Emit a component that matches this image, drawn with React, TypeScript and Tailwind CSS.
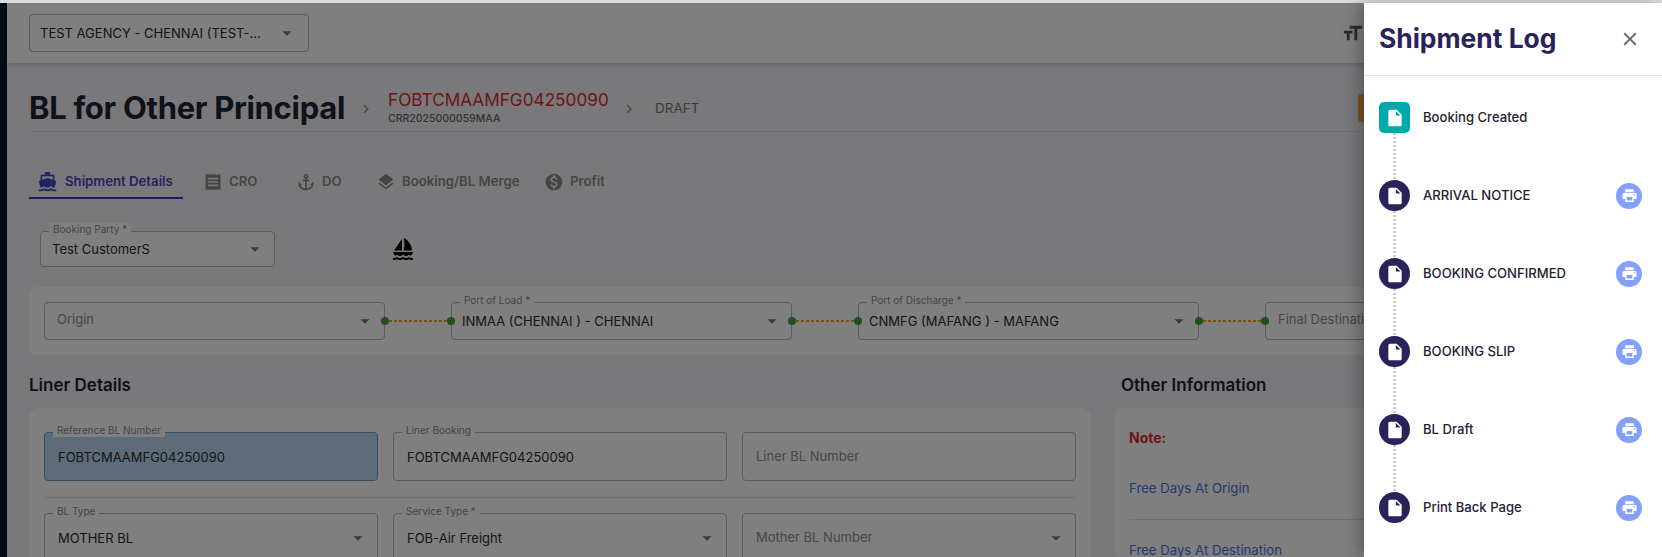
import React from "react";
import { MdArrowDropDown, MdChevronRight, MdClose, MdPrint, MdInsertDriveFile, MdDirectionsBoat, MdReceipt, MdAnchor, MdLayers, MdMonetizationOn, MdSailing, MdFormatSize } from "react-icons/md";

function Field({ label, value, placeholder, arrow, className = "", active, large }: { label?: string; value?: string; placeholder?: string; arrow?: boolean; className?: string; active?: boolean; large?: boolean }) {
  return (
    <div className={`relative flex shrink-0 items-center rounded-[4px] border pr-[8px] ${large ? "h-[49px] flex-1 pl-[13px]" : "pl-[11px]"} ${active ? "border-[#6f9bc8] bg-[#bcd8f5]" : "border-[#b5b5b5] bg-white"} ${className}`}>
      {label && <span className="absolute -top-[9px] left-[8px] bg-white px-[4px] text-[10px] leading-[13px] text-[#8a8a8a]">{label}</span>}
      <span className={`flex-1 truncate text-[13px] ${value ? "pt-[2px] text-[#2a2a2a]" : large ? "text-[#8d8d8d]" : "ml-[1px] pb-[2px] text-[#8d8d8d]"}`}>{value ?? placeholder}</span>
      {arrow && <MdArrowDropDown className="shrink-0 text-[#777]" size={22} />}
    </div>
  );
}

function Link() {
  return (
    <div className="flex h-[38px] w-[66px] shrink-0 items-center">
      <span className="z-10 -ml-[4px] size-[8px] shrink-0 rounded-full bg-[#3aa53f]" />
      <span className="h-[2px] flex-1 bg-[repeating-linear-gradient(to_right,#ff9d10_0,#ff9d10_3px,transparent_3px,transparent_5px)]" />
      <span className="z-10 -mr-[4px] size-[8px] shrink-0 rounded-full bg-[#3aa53f]" />
    </div>
  );
}

function Tab({ icon, label, className, active }: { icon: React.ReactNode; label: string; className: string; active?: boolean }) {
  return (
    <div className={`flex h-full shrink-0 items-center ${className}`}>
      <div className={`flex h-full items-center px-[8px] text-[13.2px] font-semibold ${active ? "w-[154px] gap-[7px] border-b-2 border-[#3f35c8] text-[#4b44c0]" : "gap-[6px] border-b-2 border-transparent text-[#8a8a8a]"}`}>
        {icon}
        <span className="pt-[1px]">{label}</span>
      </div>
    </div>
  );
}

function LogRow({ label, first }: { label: string; first?: boolean }) {
  return (
    <div className="flex h-[31px] items-center">
      <div className={`flex size-[31px] shrink-0 items-center justify-center text-white ${first ? "rounded-[5px] bg-[#00a9a9]" : "rounded-full bg-[#28235a]"}`}>
        <MdInsertDriveFile size={20} />
      </div>
      <span className="ml-[13px] flex-1 text-[13.1px] font-[550] text-[#1f2233]">{label}</span>
      {!first && (
        <div className="flex size-[26px] items-center justify-center rounded-full bg-[#84a0fb] text-white">
          <MdPrint size={17} />
        </div>
      )}
    </div>
  );
}

const Connector = () => <div className="ml-[14px] h-[47px] w-[3px] bg-[repeating-linear-gradient(to_bottom,#cccccc_0,#cccccc_2px,transparent_2px,transparent_4px)]" />;

export default function App() {
  return (
    <div className="relative flex h-[557px] w-[1662px] flex-col overflow-hidden bg-white font-['Inter',sans-serif]">
      <div className="h-[3px] shrink-0 bg-[#dcdcdc]" />
      <div className="relative flex min-h-0 flex-1">
        <div className="w-[7px] shrink-0 bg-[#0a1628]" />
        <main className="isolate min-w-0 flex-1 overflow-hidden bg-[#f2f3f7]">
          <header className="relative z-20 flex h-[60px] items-center justify-between bg-white pl-[22px] pr-[298px] shadow-[0_2px_6px_rgba(0,0,0,0.18)]">
            <Field value="TEST AGENCY - CHENNAI  (TEST-..." arrow className="h-[38px] w-[280px] !pl-[10px] !pr-[10px]" />
            <MdFormatSize size={23} className="text-[#555]" />
          </header>

          <div className="mx-[22px] flex h-[69px] items-center border-b border-[#e0e1e5] pt-[23px]">
            <h1 className="text-[31px] font-bold tracking-[-0.3px] text-[#1c2434]">BL for Other Principal</h1>
            <MdChevronRight size={18} className="ml-[12px] text-[#999]" />
            <div className="-mt-[2px] ml-[13px] flex w-[232px] flex-col">
              <span className="text-[17.2px] leading-[22px] text-[#dd2b2b]">FOBTCMAAMFG04250090</span>
              <span className="text-[10.5px] font-medium leading-[16px] text-[#666]">CRR2025000059MAA</span>
            </div>
            <MdChevronRight size={18} className="text-[#999]" />
            <span className="ml-[17px] text-[13.5px] text-[#777]">DRAFT</span>
            <div className="-mt-[1px] ml-auto mr-[162px] h-[28px] w-[120px] rounded-[4px] bg-[#f4a840]" />
          </div>

          <div className="ml-[22px] mt-[34px] flex h-[33px]">
            <Tab active className="w-[166px]" icon={<MdDirectionsBoat size={21} />} label="Shipment Details" />
            <Tab className="w-[93px]" icon={<MdReceipt size={20} />} label="CRO" />
            <Tab className="w-[80px]" icon={<MdAnchor size={20} />} label="DO" />
            <Tab className="w-[168px]" icon={<MdLayers size={20} />} label="Booking/BL Merge" />
            <Tab className="w-[100px]" icon={<MdMonetizationOn size={20} />} label="Profit" />
          </div>

          <div className="ml-[33px] mt-[32px] flex h-[36px] items-center">
            <Field label="Booking Party *" value="Test CustomerS" arrow className="h-[36px] w-[235px]" />
            <MdSailing size={24} className="ml-[116px] text-[#000]" />
          </div>

          <div className="mx-[22px] mt-[20px] flex h-[68px] items-center rounded-[8px] bg-white pl-[15px]">
            <Field placeholder="Origin" arrow className="h-[38px] w-[341px]" />
            <Link />
            <Field label="Port of Load *" value="INMAA (CHENNAI ) - CHENNAI" arrow className="h-[38px] w-[341px] !pl-[10px]" />
            <Link />
            <Field label="Port of Discharge *" value="CNMFG (MAFANG ) - MAFANG" arrow className="h-[38px] w-[341px] !pl-[10px]" />
            <Link />
            <Field placeholder="Final Destination" arrow className="h-[38px] w-[341px]" />
          </div>

          <div className="mx-[22px] mt-[18px] flex gap-[23px]">
            <section className="w-[1062px] shrink-0">
              <h2 className="mb-[11px] h-[24px] text-[17px] font-semibold leading-[24px] text-[#1c2434]">Liner Details</h2>
              <div className="rounded-[10px] bg-white px-[15px] pt-[24px]">
                <div className="flex gap-[15px]">
                  <Field large active label="Reference BL Number" value="FOBTCMAAMFG04250090" />
                  <Field large label="Liner Booking" value="FOBTCMAAMFG04250090" />
                  <Field large placeholder="Liner BL Number" />
                </div>
                <div className="mb-[15px] mt-[16px] border-t border-[#e2e2e2]" />
                <div className="flex gap-[15px]">
                  <Field large label="BL Type" value="MOTHER BL" arrow />
                  <Field large label="Service Type *" value="FOB-Air Freight" arrow />
                  <Field large placeholder="Mother BL Number" arrow />
                </div>
              </div>
            </section>
            <section className="min-w-0 flex-1">
              <h2 className="mb-[11px] h-[24px] pl-[7px] text-[17px] font-semibold leading-[24px] text-[#1c2434]">Other Information</h2>
              <div className="rounded-[10px] bg-white pl-[15px] pt-[20px]">
                <p className="h-[20px] text-[14px] font-bold leading-[20px] text-[#e02a2a]">Note:</p>
                <p className="mt-[30px] h-[20px] text-[13.2px] leading-[20px] text-[#4a6fe0]">Free Days At Origin</p>
                <div className="mt-[21px] border-t border-[#e2e2e2]" />
                <p className="mt-[20px] h-[20px] text-[13.2px] leading-[20px] text-[#4a6fe0]">Free Days At Destination</p>
              </div>
            </section>
          </div>
        </main>

        <div className="absolute inset-0 bg-black/50" />

        <aside className="absolute inset-y-0 right-0 w-[298px] bg-white shadow-[-6px_0_14px_rgba(0,0,0,0.25)]">
          <div className="flex h-[73px] items-center justify-between border-b border-[#e4e6ef] pl-[15px] pr-[21px]">
            <h2 className="text-[26.4px] font-bold text-[#28235a]">Shipment Log</h2>
            <MdClose size={22} className="text-[#666]" />
          </div>
          <div className="pl-[15px] pr-[20px] pt-[26px]">
            <LogRow first label="Booking Created" />
            <Connector />
            <LogRow label="ARRIVAL NOTICE" />
            <Connector />
            <LogRow label="BOOKING CONFIRMED" />
            <Connector />
            <LogRow label="BOOKING SLIP" />
            <Connector />
            <LogRow label="BL Draft" />
            <Connector />
            <LogRow label="Print Back Page" />
          </div>
        </aside>
      </div>
    </div>
  );
}
